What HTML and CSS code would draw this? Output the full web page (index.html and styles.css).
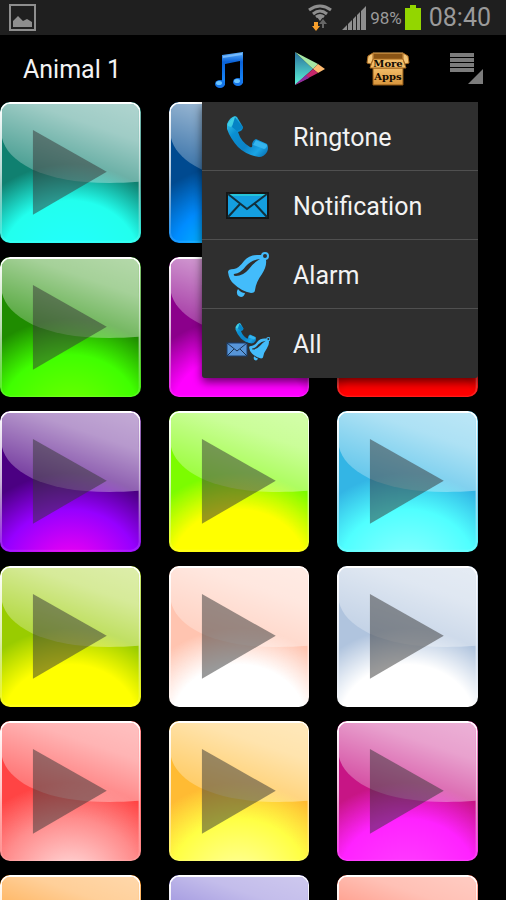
FILE: index.html
```html
<!DOCTYPE html>
<html lang="en">
<head>
    <meta charset="UTF-8">
    <meta name="viewport" content="width=device-width, initial-scale=1.0">
    <title>Animal 1</title>
    <link rel="stylesheet" href="styles.css">
</head>
<body>
    <!-- shared icon shapes -->
    <svg class="defs" width="0" height="0" aria-hidden="true">
        <defs>
            <linearGradient id="shine" x1="0.9" y1="0" x2="0.3" y2="1">
                <stop offset="0" stop-color="#fff" stop-opacity="0.66"/>
                <stop offset="0.3" stop-color="#fff" stop-opacity="0.6"/>
                <stop offset="1" stop-color="#fff" stop-opacity="0.2"/>
            </linearGradient>
            <linearGradient id="rim" x1="0" y1="0" x2="0" y2="1">
                <stop offset="0" stop-color="#fff"/>
                <stop offset="0.5" stop-color="#fff" stop-opacity="0.7"/>
                <stop offset="1" stop-color="#fff" stop-opacity="0.1"/>
            </linearGradient>
            <linearGradient id="blue" x1="0" y1="0" x2="1" y2="1">
                <stop offset="0" stop-color="#3fd0ee"/>
                <stop offset="0.3" stop-color="#0a8fd2"/>
                <stop offset="0.6" stop-color="#0c83c6"/>
                <stop offset="0.8" stop-color="#1aa5e6"/>
                <stop offset="1" stop-color="#0565a8"/>
            </linearGradient>
            <linearGradient id="note" x1="0" y1="0" x2="0" y2="1">
                <stop offset="0" stop-color="#5fb2ff"/>
                <stop offset="0.3" stop-color="#0a62d8"/>
                <stop offset="1" stop-color="#1a8dff"/>
            </linearGradient>
            <linearGradient id="teal" x1="0" y1="0" x2="0" y2="1">
                <stop offset="0" stop-color="#2a6f9c"/>
                <stop offset="1" stop-color="#5cf5d8"/>
            </linearGradient>
            <linearGradient id="card" x1="0" y1="0" x2="0" y2="1">
                <stop offset="0" stop-color="#f3bd69"/>
                <stop offset="1" stop-color="#d8953c"/>
            </linearGradient>
            <symbol id="gloss" viewBox="0 0 141 141">
                <path d="M2 10Q2 2 10 2H131Q139 2 139 10V80C50 87 8 62 2 36Z" fill="url(#shine)"/>
                <path d="M33 28L107 70L33 113Z" fill="#333" fill-opacity="0.5"/>
                <rect x="1" y="1" width="139" height="139" rx="9" fill="none" stroke="url(#rim)" stroke-width="2"/>
            </symbol>
            <symbol id="phone" viewBox="0 0 46 46">
                <path d="M3 10Q6 3 11 2L13 3L19 13Q19 17 14 18Q17 28 26 33Q29 34 28 30Q29 26 32 25L43 30Q45 34 43 38Q40 43 35 43Q22 41 14 33Q6 24 3 15Z" fill="url(#blue)"/>
                <path d="M4 9L10 3L12 3L13 6L7 13L4 12Z" fill="#4fe0e2" opacity="0.6"/>
                <path d="M11 3L19 14L13 17L8 13Z" fill="#0583c5"/>
                <path d="M32 26L43 31Q43 34 40 35L29 31Z" fill="#35b5ee"/>
            </symbol>
            <symbol id="bell" viewBox="0 0 46 46">
                <path d="M4 20Q4 17 10 17Q15 16 20 9Q25 3 33 3H38L42 8Q43 14 38 22Q32 30 31 38Q31 41 27 41Q17 39 10 32Q5 28 4 20Z" fill="#43bcfb"/>
                <path d="M10 22Q17 21 22 14Q27 8 36 7Q28 12 25 17Q19 24 12 24Q9 24 10 22Z" fill="#2f2f2f"/>
                <circle cx="41" cy="4" r="3" fill="#2f2f2f" stroke="#43bcfb" stroke-width="2"/>
                <path d="M14 37Q17 41 21 41Q20 45 17 45Q12 44 13 39Z" fill="#43bcfb"/>
            </symbol>
        </defs>
    </svg>

    <div class="status-bar">
        <svg class="picture-icon" width="27" height="27" viewBox="0 0 27 27" aria-hidden="true">
            <rect x="1" y="1" width="25" height="25" fill="none" stroke="#8e8e8e" stroke-width="2"/>
            <path d="M4 17L9 12L14 17L18 15L23 18V23H4Z" fill="#8e8e8e"/>
        </svg>
        <svg width="24" height="27" viewBox="0 0 24 27" aria-hidden="true">
            <g fill="none" stroke="#8e8e8e" stroke-width="3">
                <path d="M1 6Q12 -2 23 6"/>
                <path d="M5 10Q12 4 19 10"/>
                <path d="M8 13Q12 10 16 13"/>
            </g>
            <path d="M9 13H15L12 17Z" fill="#8e8e8e"/>
            <path d="M6 18H10V22H12L8 27L4 22H6Z" fill="#f8a02c"/>
            <path d="M14 24V20H11L15 15L19 20H16V24Z" fill="#666"/>
        </svg>
        <svg class="signal-icon" width="24" height="24" viewBox="0 0 24 24" aria-hidden="true">
            <path d="M0 24L5 19V24ZM6 24V18L10 14V24ZM11 24V13L14 10V24ZM15 24V9L18 6V24ZM19 24V5L24 0V24Z" fill="#8e8e8e"/>
        </svg>
        <span class="percent">98%</span>
        <svg width="16" height="25" viewBox="0 0 16 25" aria-hidden="true">
            <path d="M5 0H11V3H16V25H0V3H5Z" fill="#93d600"/>
        </svg>
        <span class="clock">08:40</span>
    </div>

    <div class="nav">
        <h1>Animal 1</h1>
        <button type="button" class="nav-btn" aria-label="Music">
            <svg width="46" height="46" viewBox="0 0 46 46">
                <path d="M15 8L36 5V36H33V14L18 17V38H15Z" fill="url(#note)"/>
                <ellipse cx="13" cy="37" rx="5" ry="4" fill="#1576ea"/>
                <ellipse cx="31" cy="35" rx="5" ry="4" fill="#1576ea"/>
                <ellipse cx="12" cy="36" rx="3" ry="2" fill="#6cc4ff"/>
                <ellipse cx="30" cy="34" rx="3" ry="2" fill="#6cc4ff"/>
                <path d="M16 9L35 6V8L16 11Z" fill="#8bc8ff" opacity="0.7"/>
            </svg>
        </button>
        <button type="button" class="nav-btn" aria-label="Play store">
            <svg width="46" height="46" viewBox="0 0 46 46">
                <path d="M9 5L27 22L9 38Z" fill="url(#teal)"/>
                <path d="M9 5L32 17L27 22Z" fill="#a6e8a4"/>
                <path d="M32 17L39 22L32 26L27 22Z" fill="#fdba70"/>
                <path d="M27 22L32 26L9 38Z" fill="#c5276a"/>
                <path d="M9 38L20 28L23 31Z" fill="#8b2fa0"/>
            </svg>
        </button>
        <button type="button" class="nav-btn" aria-label="More apps">
            <svg width="46" height="46" viewBox="0 0 46 46">
                <path d="M8 6H38V13H8Z" fill="#8a5415" stroke="#e9ad58"/>
                <path d="M8 21H38V38H8Z" fill="url(#card)" stroke="#8a5415"/>
                <path d="M8 12H38L41 21H5Z" fill="#f2bc68" stroke="#a86a20"/>
                <path d="M8 6L3 9L2 16L6 17L8 12Z" fill="#f5c678" stroke="#a86a20"/>
                <path d="M38 6L43 9L44 16L40 17L38 12Z" fill="#f5c678" stroke="#a86a20"/>
                <text class="box-text" x="23" y="20">More</text>
                <text class="box-text" x="23" y="33">Apps</text>
            </svg>
        </button>
        <button type="button" class="nav-btn" aria-label="Menu" aria-expanded="true">
            <svg width="46" height="46" viewBox="0 0 46 46">
                <path d="M6 6H30V10H6ZM6 11H30V15H6ZM6 16H30V20H6ZM6 21H30V25H6Z" fill="#7c7c7c"/>
                <path d="M39 22V37H24Z" fill="#7c7c7c"/>
            </svg>
        </button>

        <div class="menu">
            <button type="button" class="menu-item">
                <svg width="46" height="46"><use href="#phone"/></svg>
                <span>Ringtone</span>
            </button>
            <button type="button" class="menu-item">
                <svg width="46" height="46" viewBox="0 0 46 46">
                    <rect x="3" y="10" width="41" height="25" fill="#149fe0" stroke="#151515" stroke-width="2"/>
                    <path d="M4 11H43V13H4Z" fill="#25c3d8"/>
                    <path d="M4 11L23 26L43 11M4 34L16 21M43 34L31 21" fill="none" stroke="#12303c" stroke-width="2"/>
                </svg>
                <span>Notification</span>
            </button>
            <button type="button" class="menu-item">
                <svg width="46" height="46"><use href="#bell"/></svg>
                <span>Alarm</span>
            </button>
            <button type="button" class="menu-item">
                <svg width="46" height="46" viewBox="0 0 46 46">
                    <use href="#phone" x="10" y="0" width="23" height="23"/>
                    <rect x="3" y="21" width="20" height="13" fill="#5795d8" stroke="#1c3f6c"/>
                    <path d="M3 21L13 29L23 21M3 34L10 27M23 34L16 27" fill="none" stroke="#1c3452"/>
                    <use href="#bell" x="23" y="15" width="24" height="24"/>
                </svg>
                <span>All</span>
            </button>
        </div>
    </div>

    <div class="tiles">
        <button type="button" class="tile teal" aria-label="Play sound 1"><svg><use href="#gloss"/></svg></button>
        <button type="button" class="tile blue" aria-label="Play sound 2"><svg><use href="#gloss"/></svg></button>
        <button type="button" class="tile black" aria-label="Play sound 3"><svg><use href="#gloss"/></svg></button>
        <button type="button" class="tile green" aria-label="Play sound 4"><svg><use href="#gloss"/></svg></button>
        <button type="button" class="tile magenta" aria-label="Play sound 5"><svg><use href="#gloss"/></svg></button>
        <button type="button" class="tile red" aria-label="Play sound 6"><svg><use href="#gloss"/></svg></button>
        <button type="button" class="tile indigo" aria-label="Play sound 7"><svg><use href="#gloss"/></svg></button>
        <button type="button" class="tile lime" aria-label="Play sound 8"><svg><use href="#gloss"/></svg></button>
        <button type="button" class="tile sky" aria-label="Play sound 9"><svg><use href="#gloss"/></svg></button>
        <button type="button" class="tile olive" aria-label="Play sound 10"><svg><use href="#gloss"/></svg></button>
        <button type="button" class="tile peach" aria-label="Play sound 11"><svg><use href="#gloss"/></svg></button>
        <button type="button" class="tile steel" aria-label="Play sound 12"><svg><use href="#gloss"/></svg></button>
        <button type="button" class="tile coral" aria-label="Play sound 13"><svg><use href="#gloss"/></svg></button>
        <button type="button" class="tile amber" aria-label="Play sound 14"><svg><use href="#gloss"/></svg></button>
        <button type="button" class="tile pink" aria-label="Play sound 15"><svg><use href="#gloss"/></svg></button>
        <button type="button" class="tile orange" aria-label="Play sound 16"><svg><use href="#gloss"/></svg></button>
        <button type="button" class="tile violet" aria-label="Play sound 17"><svg><use href="#gloss"/></svg></button>
        <button type="button" class="tile salmon" aria-label="Play sound 18"><svg><use href="#gloss"/></svg></button>
    </div>
</body>
</html>
```
FILE: styles.css
```css
* {
    box-sizing: border-box;
}

body {
    font-family: Roboto, sans-serif;
    margin: 0;
    height: 100vh;
    display: flex;
    flex-direction: column;
    background-color: #000;
    color: #f3f3f3;
}

button {
    border: 0;
    padding: 0;
    background: none;
    color: inherit;
    font: inherit;
    cursor: pointer;
}

.defs {
    position: absolute;
}

.status-bar {
    display: flex;
    align-items: center;
    flex: none;
    height: 35px;
    padding: 0 15px 0 9px;
    background-color: #1f1f1f;
    color: #9a9a9a;
}

.picture-icon {
    margin-right: auto;
}

.signal-icon {
    margin: 0 4px 0 10px;
}

.percent {
    font-size: 17px;
    margin-right: 3px;
}

.clock {
    font-size: 25px;
    margin-left: 8px;
}

.nav {
    position: relative;
    display: flex;
    align-items: center;
    flex: none;
    height: 67px;
    padding-top: 2px;
    padding-left: 23px;
    z-index: 1;
}

h1 {
    flex: 1;
    margin: 0;
    font-size: 25px;
    font-weight: normal;
}

.nav-btn {
    display: flex;
    justify-content: center;
    width: 79px;
}

.box-text {
    font-family: "DejaVu Serif", serif;
    font-size: 10px;
    font-weight: bold;
    text-anchor: middle;
    fill: #140a00;
}

.menu {
    position: absolute;
    top: 100%;
    right: 28px;
    width: 276px;
    background-color: #2f2f2f;
    border-radius: 0 0 3px 3px;
    box-shadow: 0 4px 10px rgba(0, 0, 0, 0.6);
}

.menu-item {
    display: flex;
    align-items: center;
    gap: 23px;
    width: 100%;
    height: 69px;
    padding-top: 2px;
    padding-left: 22px;
    font-size: 25px;
    border-bottom: 1px solid #505050;
}

.menu-item:last-child {
    border-bottom: 0;
}

.tiles {
    flex: 1;
    min-height: 0;
    overflow-y: auto;
    scrollbar-width: none;
    display: grid;
    grid-template-columns: repeat(3, 1fr);
    grid-auto-rows: max-content;
    align-content: start;
    gap: 14px 28px;
    padding-right: 28px;
}

.tile {
    border-radius: 10px;
    overflow: hidden;
    background: radial-gradient(ellipse 78% 68% at 50% 112%, var(--core) 0%, var(--glow) 62%, transparent 100%), var(--base);
}

.tile svg {
    display: block;
    width: 100%;
    height: auto;
    aspect-ratio: 1;
}

.teal {
    --base: #108070;
    --glow: #22ffee;
    --core: #22ffff;
}

.blue {
    --base: #004a90;
    --glow: #008cff;
    --core: #00e4ff;
}

.black {
    --base: #222;
    --glow: #555;
    --core: #888;
}

.green {
    --base: #1f8c00;
    --glow: #40ff00;
    --core: #70ff00;
}

.magenta {
    --base: #8b008b;
    --glow: #ff00ff;
    --core: #ff00ff;
}

.red {
    --base: #b00000;
    --glow: #ff0000;
    --core: #ff0000;
}

.indigo {
    --base: #4b0082;
    --glow: #9600ff;
    --core: #ff00f0;
}

.lime {
    --base: #7cfc00;
    --glow: #ffff00;
    --core: #ffff00;
}

.sky {
    --base: #33b5e5;
    --glow: #50ffff;
    --core: #90ffff;
}

.olive {
    --base: #99cc00;
    --glow: #ffff00;
    --core: #ffff00;
}

.peach {
    --base: #ffc4b0;
    --glow: #fff;
    --core: #fff;
}

.steel {
    --base: #b0c4de;
    --glow: #fff;
    --core: #fff;
}

.coral {
    --base: #ff4444;
    --glow: #ff8c8c;
    --core: #ffe0e0;
}

.amber {
    --base: #ffbb33;
    --glow: #ffff44;
    --core: #ffffa0;
}

.pink {
    --base: #c71585;
    --glow: #ff22ff;
    --core: #ff40ff;
}

.orange {
    --base: #ff8800;
    --glow: #ffcc00;
    --core: #ffff00;
}

.violet {
    --base: #6a5acd;
    --glow: #a090ff;
    --core: #d0c0ff;
}

.salmon {
    --base: #ff6347;
    --glow: #ffa070;
    --core: #ffd0a0;
}
```
